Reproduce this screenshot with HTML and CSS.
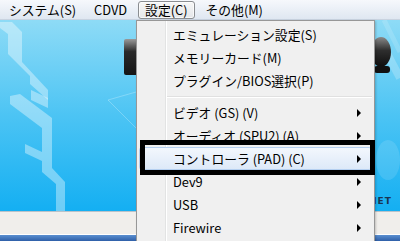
FILE: index.html
```
<!DOCTYPE html>
<html lang="ja">
<head>
    <meta charset="UTF-8">
    <title>PCSX2 設定メニュー</title>
    <link rel="stylesheet" href="styles.css">
</head>
<body>
    <div class="menubar">
        <span class="menu-title">システム(S)</span>
        <span class="menu-title">CDVD</span>
        <span class="menu-title active">設定(C)</span>
        <span class="menu-title">その他(M)</span>
    </div>
    <div class="window">
        <div class="splash">
            <svg width="400" height="191" viewBox="0 20 400 191">
                <defs>
                    <linearGradient id="sky" x1="0" y1="0" x2="0" y2="1">
                        <stop offset="0" stop-color="#8edbf6"/>
                        <stop offset="0.5" stop-color="#4cc4f4"/>
                        <stop offset="1" stop-color="#14aff2"/>
                    </linearGradient>
                    <linearGradient id="slab" x1="0" y1="0" x2="0" y2="1">
                        <stop offset="0" stop-color="#9a9a9a"/>
                        <stop offset="0.35" stop-color="#2a2a2a"/>
                        <stop offset="1" stop-color="#151515"/>
                    </linearGradient>
                    <linearGradient id="pad" x1="0" y1="0" x2="0" y2="1">
                        <stop offset="0" stop-color="#8a8a8a"/>
                        <stop offset="0.45" stop-color="#2e2e2e"/>
                        <stop offset="1" stop-color="#0e0e0e"/>
                    </linearGradient>
                </defs>
                <rect x="0" y="20" width="400" height="191" fill="url(#sky)"/>
                <g fill="#fff" fill-opacity="0.38">
                    <polygon points="0,22 12,22 22,32 22,62 48,90 48,100 30,84 30,76 8,54 8,34 0,28"/>
                    <polygon points="31,90 48,98 48,108 31,100"/>
                    <polygon points="10,96 10,104 42,128 42,172 56,184 56,211 65,211 65,182 52,168 52,118 20,94"/>
                    <polygon points="25,144 42,152 42,161 25,153"/>
                </g>
                <polyline points="136,92 108,100 136,128" fill="none" stroke="#fff" stroke-opacity="0.25" stroke-width="1"/>
                <rect x="124" y="39" width="14" height="36" rx="2" fill="url(#slab)"/>
                <polyline points="380,40 400,78" stroke="#fff" stroke-opacity="0.22" stroke-width="8"/>
                <polyline points="384,20 400,52" stroke="#fff" stroke-opacity="0.15" stroke-width="5"/>
                <ellipse cx="381" cy="52" rx="10" ry="15" fill="url(#pad)"/>
                <rect x="374" y="66" width="16" height="7" rx="3" fill="#111"/>
                <ellipse cx="388" cy="160" rx="12" ry="20" fill="#fff" fill-opacity="0.12"/>
                <text x="369" y="204" class="logo-text">NET</text>
            </svg>
        </div>
        <div class="status"></div>
        <div class="taskbar"></div>
    </div>
    <div class="dropdown">
        <div class="item"><span>エミュレーション設定(S)</span></div>
        <div class="item"><span>メモリーカード(M)</span></div>
        <div class="item"><span>プラグイン/BIOS選択(P)</span></div>
        <div class="separator"></div>
        <div class="item"><span>ビデオ (GS) (V)</span><i class="arrow"></i></div>
        <div class="item"><span>オーディオ (SPU2) (A)</span><i class="arrow"></i></div>
        <div class="item selected"><span>コントローラ (PAD) (C)</span><i class="arrow"></i></div>
        <div class="item"><span>Dev9</span><i class="arrow"></i></div>
        <div class="item"><span>USB</span><i class="arrow"></i></div>
        <div class="item"><span>Firewire</span><i class="arrow"></i></div>
    </div>
    <div class="mark"></div>
</body>
</html>
```

FILE: styles.css
```
* {
    margin: 0;
    padding: 0;
    box-sizing: border-box;
}
body {
    width: 400px;
    height: 241px;
    overflow: hidden;
    position: relative;
    font-family: "Noto Sans CJK JP", "Noto Sans", sans-serif;
    font-size: 12.8px;
    color: #000;
    background-color: #f0eeeb;
}
/* #region メニューバー */
.menubar {
    height: 20px;
    display: flex;
    align-items: center;
    gap: 4px;
    padding-left: 2px;
    background: linear-gradient(#f6f8fc, #dfe7f1);
    border-bottom: 1px solid #c9d3e0;
}
.menu-title {
    height: 18px;
    line-height: 16px;
    padding: 0 6px;
    border: 1px solid transparent;
    border-radius: 3px;
    white-space: nowrap;
}
.menu-title.active {
    border-color: #8a8d91;
    background: linear-gradient(#f7f7f7, #e4e6e9);
    box-shadow: inset 0 0 0 1px rgba(255, 255, 255, 0.7);
}
/* #endregion */

.window {
    display: flex;
    flex-direction: column;
}
.splash {
    height: 191px;
}
.splash svg {
    display: block;
}
.logo-text {
    font-family: "DejaVu Sans", sans-serif;
    font-size: 9px;
    font-weight: bold;
    letter-spacing: 1px;
    fill: #1a3550;
}
.status {
    height: 24px;
    background-color: #f0eeeb;
    border-top: 1px solid #b9c2c9;
    border-bottom: 1px solid #fff;
}
.taskbar {
    height: 6px;
    background: linear-gradient(#5a8fd0, #2f5fa8);
}

/* #region ドロップダウン */
.dropdown {
    position: absolute;
    left: 136px;
    top: 20px;
    width: 239px;
    height: 230px;
    padding-top: 2px;
    border: 1px solid #979797;
    background: linear-gradient(to right, #f0f0f0 28px, #e2e3e3 28px, #e2e3e3 29px, #fff 29px, #fff 30px, #f0f0f0 30px);
    box-shadow: 1px 1px 2px rgba(0, 0, 0, 0.2);
}
.item {
    height: 23px;
    line-height: 21px;
    margin: 0 2px;
    padding: 0 10px 0 33px;
    display: flex;
    justify-content: space-between;
    align-items: center;
    border: 1px solid transparent;
    border-radius: 3px;
    white-space: nowrap;
}
.item.selected {
    border-color: #b4cff0;
    background: linear-gradient(#f3f7fd, #dde9f8);
}
.arrow {
    width: 0;
    height: 0;
    border-left: 4px solid #000;
    border-top: 4px solid transparent;
    border-bottom: 4px solid transparent;
}
.separator {
    height: 9px;
    margin: 0 2px 0 30px;
    background: linear-gradient(transparent 4px, #e0e0e0 4px, #e0e0e0 5px, #fff 5px, #fff 6px, transparent 6px);
}
/* #endregion */

.mark {
    position: absolute;
    left: 140px;
    top: 140px;
    width: 235px;
    height: 35px;
    border: 5px solid #000;
}
```
